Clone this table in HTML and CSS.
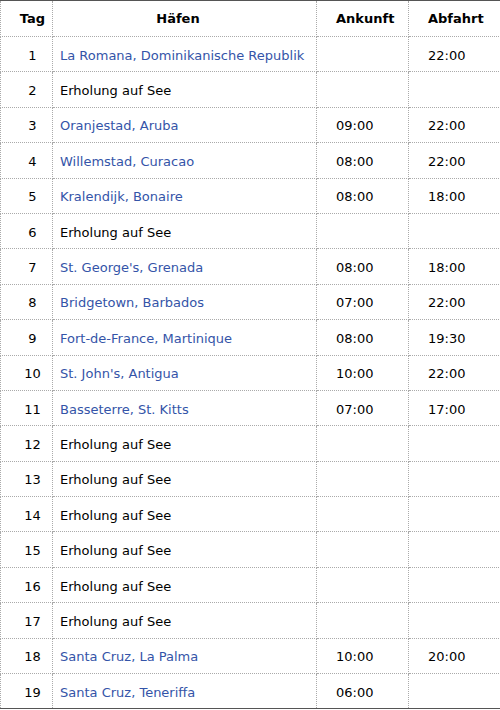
FILE: index.html
```html
<!DOCTYPE html>
<html lang="de">
<head>
<meta charset="utf-8">
<link rel="stylesheet" href="styles.css">
</head>
<body>
<table class="route">
<thead>
<tr><th class="c-tag">Tag</th><th class="c-port">Häfen</th><th class="c-time">Ankunft</th><th class="c-time">Abfahrt</th></tr>
</thead>
<tbody>
<tr><td class="c-tag">1</td><td class="c-port"><a href="#">La Romana, Dominikanische Republik</a></td><td class="c-time"></td><td class="c-time">22:00</td></tr>
<tr><td class="c-tag">2</td><td class="c-port">Erholung auf See</td><td class="c-time"></td><td class="c-time"></td></tr>
<tr><td class="c-tag">3</td><td class="c-port"><a href="#">Oranjestad, Aruba</a></td><td class="c-time">09:00</td><td class="c-time">22:00</td></tr>
<tr><td class="c-tag">4</td><td class="c-port"><a href="#">Willemstad, Curacao</a></td><td class="c-time">08:00</td><td class="c-time">22:00</td></tr>
<tr><td class="c-tag">5</td><td class="c-port"><a href="#">Kralendijk, Bonaire</a></td><td class="c-time">08:00</td><td class="c-time">18:00</td></tr>
<tr><td class="c-tag">6</td><td class="c-port">Erholung auf See</td><td class="c-time"></td><td class="c-time"></td></tr>
<tr><td class="c-tag">7</td><td class="c-port"><a href="#">St. George's, Grenada</a></td><td class="c-time">08:00</td><td class="c-time">18:00</td></tr>
<tr><td class="c-tag">8</td><td class="c-port"><a href="#">Bridgetown, Barbados</a></td><td class="c-time">07:00</td><td class="c-time">22:00</td></tr>
<tr><td class="c-tag">9</td><td class="c-port"><a href="#">Fort-de-France, Martinique</a></td><td class="c-time">08:00</td><td class="c-time">19:30</td></tr>
<tr><td class="c-tag">10</td><td class="c-port"><a href="#">St. John's, Antigua</a></td><td class="c-time">10:00</td><td class="c-time">22:00</td></tr>
<tr><td class="c-tag">11</td><td class="c-port"><a href="#">Basseterre, St. Kitts</a></td><td class="c-time">07:00</td><td class="c-time">17:00</td></tr>
<tr><td class="c-tag">12</td><td class="c-port">Erholung auf See</td><td class="c-time"></td><td class="c-time"></td></tr>
<tr><td class="c-tag">13</td><td class="c-port">Erholung auf See</td><td class="c-time"></td><td class="c-time"></td></tr>
<tr><td class="c-tag">14</td><td class="c-port">Erholung auf See</td><td class="c-time"></td><td class="c-time"></td></tr>
<tr><td class="c-tag">15</td><td class="c-port">Erholung auf See</td><td class="c-time"></td><td class="c-time"></td></tr>
<tr><td class="c-tag">16</td><td class="c-port">Erholung auf See</td><td class="c-time"></td><td class="c-time"></td></tr>
<tr><td class="c-tag">17</td><td class="c-port">Erholung auf See</td><td class="c-time"></td><td class="c-time"></td></tr>
<tr><td class="c-tag">18</td><td class="c-port"><a href="#">Santa Cruz, La Palma</a></td><td class="c-time">10:00</td><td class="c-time">20:00</td></tr>
<tr><td class="c-tag">19</td><td class="c-port"><a href="#">Santa Cruz, Teneriffa</a></td><td class="c-time">06:00</td><td class="c-time"></td></tr>
</tbody>
</table>
</body>
</html>
```
FILE: styles.css
```css
html, body {
  margin: 0;
  padding: 0;
  background: #fff;
}
body {
  font-family: "DejaVu Sans", Verdana, sans-serif;
  font-size: 13px;
  color: #000;
}
.route {
  width: 500px;
  border-collapse: collapse;
  table-layout: fixed;
  border-top: 1px solid #555;
  border-bottom: 1px solid #555;
}
.route th,
.route td {
  box-sizing: border-box;
  border: 1px dotted #aaa;
  padding: 2px 0 0 0;
  height: 35.4px;
  vertical-align: middle;
  line-height: 15px;
}
.route thead th {
  font-weight: bold;
  height: 36px;
  padding-top: 0;
}
.c-tag {
  width: 52px;
  text-align: center;
  padding-left: 12px !important;
}
.c-port {
  width: 264px;
  text-align: left;
  padding-left: 7px !important;
}
th.c-port {
  text-align: center;
  padding-right: 20px !important;
}
.c-time {
  width: 92px;
  text-align: left;
  padding-left: 19px !important;
}
.route a {
  color: #3454a8;
  text-decoration: none;
}
```
